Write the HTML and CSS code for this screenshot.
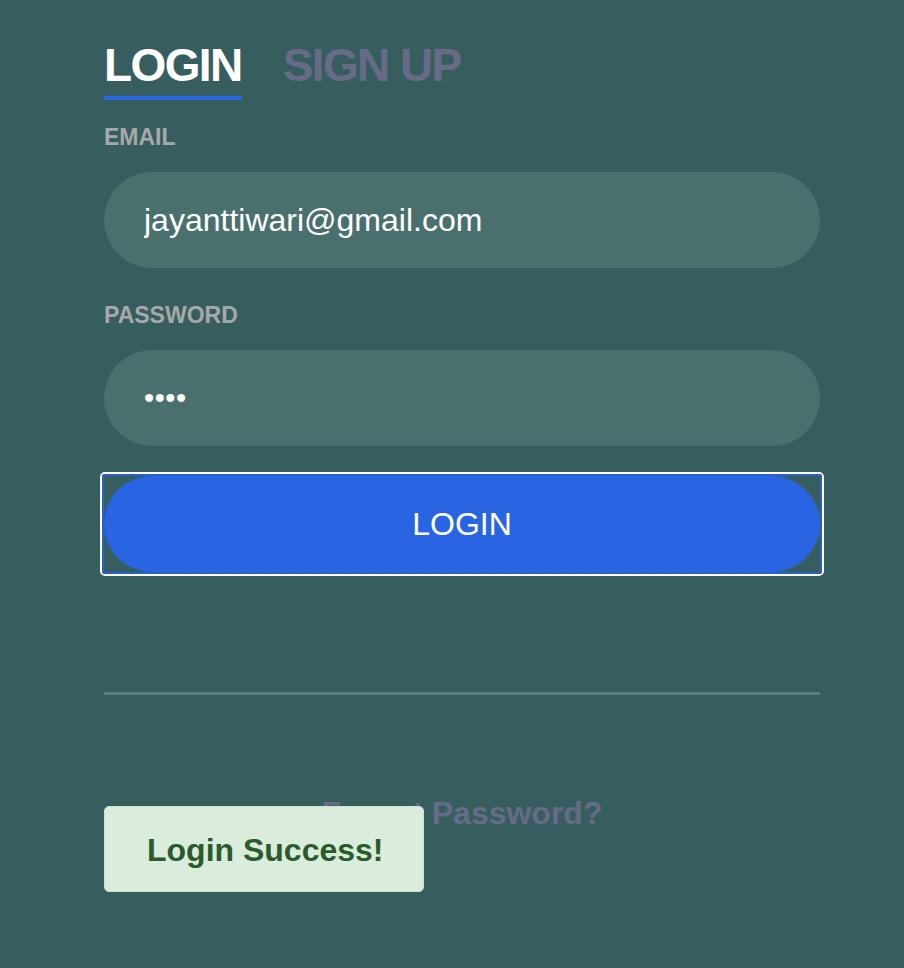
FILE: index.html
```html
<!DOCTYPE html>
<html lang="en">
<head>
<meta charset="utf-8">
<title>Login</title>
<link rel="stylesheet" href="styles.css">
</head>
<body>
<main class="page">
  <div class="form">
    <nav class="tabs">
      <span class="tab tab-active">LOGIN</span>
      <span class="tab">SIGN UP</span>
    </nav>
    <label class="label label-email" for="email">EMAIL</label>
    <input class="field" id="email" type="text" value="jayanttiwari@gmail.com" readonly>
    <label class="label label-pass" for="pass">PASSWORD</label>
    <input class="field" id="pass" type="password" value="1234" readonly>
    <div class="focus-ring">
      <div class="focus-inner">
        <button class="btn" type="button">LOGIN</button>
      </div>
    </div>
    <hr class="divider">
    <p class="forgot">Forgot Password?</p>
  </div>
  <div class="toast">Login Success!</div>
</main>
</body>
</html>
```

FILE: styles.css
```css
* { box-sizing: border-box; }
html, body {
  margin: 0;
  padding: 0;
  background: #365e5e;
  height: 100%;
}
body {
  font-family: "Liberation Sans", Arial, sans-serif;
}
.page {
  position: relative;
  min-height: 968px;
  padding: 42px 0 0 104px;
}
.form {
  width: 716px;
  display: flex;
  flex-direction: column;
}
.tabs {
  display: flex;
  gap: 41px;
  align-items: flex-start;
}
.tab {
  font-size: 46px;
  line-height: 46px;
  font-weight: 700;
  letter-spacing: -1.6px;
  color: #676b87;
  padding-bottom: 12px;
}
.tab-active {
  color: #ffffff;
  padding-bottom: 8px;
  border-bottom: 4px solid #2a67e0;
}
.label {
  font-size: 23px;
  line-height: 23px;
  font-weight: 700;
  color: #a7a9a8;
}
.label-email { margin-top: 26px; }
.label-pass { margin-top: 36px; }
.field {
  margin-top: 23px;
  width: 716px;
  height: 96px;
  border: none;
  border-radius: 48px;
  background: #4a706e;
  color: #ffffff;
  font-family: "Liberation Sans", Arial, sans-serif;
  font-size: 32px;
  padding: 0 40px;
  outline: none;
}
#pass {
  font-size: 29px;
  letter-spacing: 0.5px;
}
.focus-ring {
  margin: 26px 0 0 -4px;
  width: 724px;
  border: 2px solid #ffffff;
  border-radius: 5px;
}
.focus-inner {
  border: 2px solid #2a60cc;
  border-radius: 2px;
}
.btn {
  display: block;
  width: 716px;
  height: 96px;
  border: none;
  border-radius: 48px;
  background: #2965e3;
  color: #ffffff;
  font-family: "Liberation Sans", Arial, sans-serif;
  font-size: 32px;
  padding: 0;
}
.divider {
  margin: 116px 0 0;
  border: none;
  height: 3px;
  background: #5a7e7e;
}
.forgot {
  margin: 102px 0 0;
  text-align: center;
  font-size: 32px;
  line-height: 32px;
  font-weight: 700;
  color: #676b87;
}
.toast {
  position: absolute;
  left: 104px;
  top: 806px;
  width: 320px;
  padding: 27px 0 25px 42px;
  background: #daecdc;
  border: 1px solid #cbe4ce;
  border-radius: 5px;
  color: #2b5a2c;
  font-size: 32px;
  line-height: 32px;
  font-weight: 700;
}
```
